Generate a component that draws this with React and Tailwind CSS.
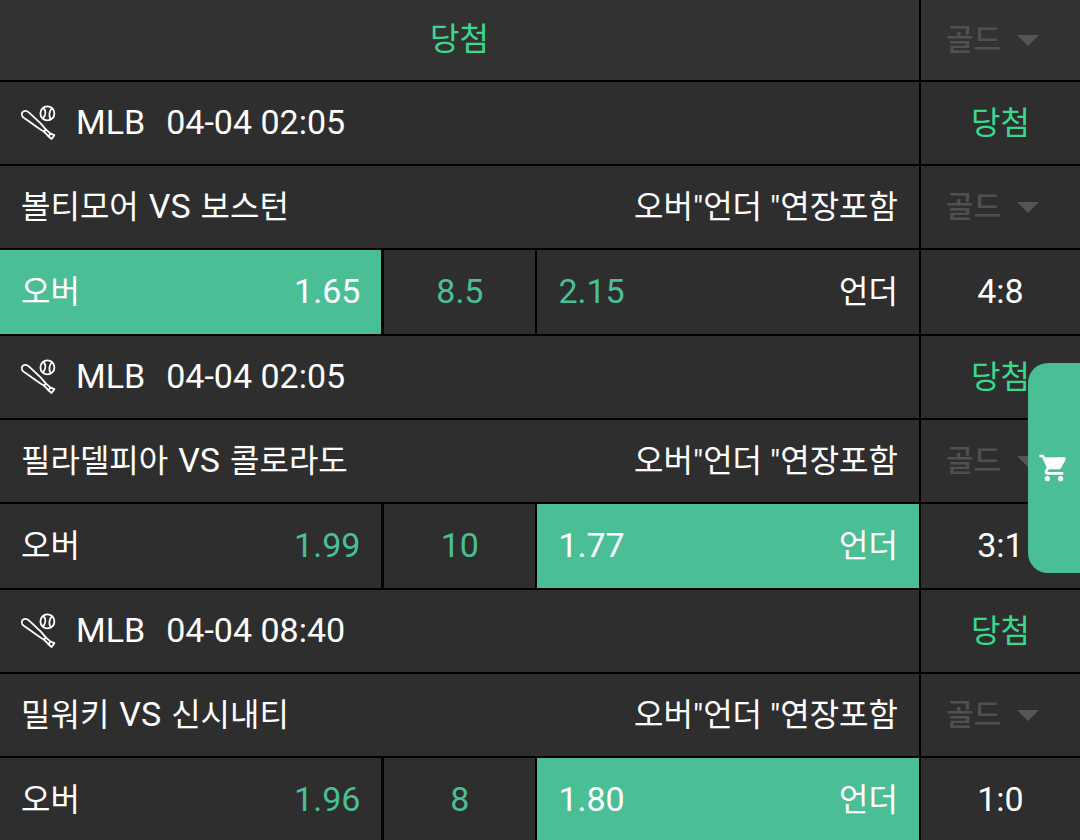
import { MdShoppingCart } from 'react-icons/md';

const games = [
  {
    id: 1,
    league: 'MLB',
    time: '04-04 02:05',
    home: '볼티모어',
    away: '보스턴',
    over: '1.65',
    line: '8.5',
    under: '2.15',
    picked: 'over',
    score: '4:8',
  },
  {
    id: 2,
    league: 'MLB',
    time: '04-04 02:05',
    home: '필라델피아',
    away: '콜로라도',
    over: '1.99',
    line: '10',
    under: '1.77',
    picked: 'under',
    score: '3:1',
  },
  {
    id: 3,
    league: 'MLB',
    time: '04-04 08:40',
    home: '밀워키',
    away: '신시내티',
    over: '1.96',
    line: '8',
    under: '1.80',
    picked: 'under',
    score: '1:0',
  },
];

function BaseballIcon() {
  return (
    <svg
      className="h-9 w-9 shrink-0"
      viewBox="0 0 36 36"
      fill="none"
      stroke="currentColor"
      strokeWidth="1.8"
      strokeLinecap="round"
      strokeLinejoin="round"
      aria-hidden="true"
    >
      <path d="M2.4 11.6C0.6 8.6 2.6 5.6 5.8 5.8C7 5.9 8.2 6.7 9.4 7.9L20.6 18.4C22.6 20.4 23.8 22.4 26 24.6L24 26.7C21.6 25 19.4 24 17.2 22.3L6 14.2C4.4 13.2 3.2 12.8 2.4 11.6Z" />
      <path d="M26 24.6L30.6 28.6M24 26.7L28.4 31.2" />
      <path d="M30.6 28.6L34.4 30.2L31.6 34L28.4 31.2Z" />
      <circle cx="27.4" cy="8.4" r="7" />
      <path d="M23.4 3C26 5.4 26 9.6 23 13.6M32 3.4C29 6 28.6 11 30.6 14.2" />
    </svg>
  );
}

function CurrencySelect() {
  return (
    <div className="relative flex w-full items-center">
      <select
        aria-label="골드"
        className="w-full cursor-pointer appearance-none bg-transparent pl-[25px] text-[30px] leading-10 font-medium text-[#505050] outline-none"
      >
        <option>골드</option>
      </select>
      <svg
        className="pointer-events-none absolute right-[41px] h-3 w-[22px] text-[#555555]"
        viewBox="0 0 22 12"
        fill="currentColor"
        aria-hidden="true"
      >
        <path d="M0 1H22L11 12Z" />
      </svg>
    </div>
  );
}

function Row({ children, side, className }) {
  return (
    <div className={`flex border-b-2 border-black ${className}`}>
      <div className="flex min-w-0 flex-1 items-stretch">{children}</div>
      <div className="flex w-[161px] shrink-0 items-center justify-center border-l-2 border-black">
        {side}
      </div>
    </div>
  );
}

function Won() {
  return <span className="text-[32px] text-[#3bd88c]">당첨</span>;
}

function Game({ game }) {
  const over = game.picked === 'over';
  const under = game.picked === 'under';

  return (
    <section>
      <Row className="h-[84px]" side={<Won />}>
        <div className="flex items-center px-5 text-[34px]">
          <BaseballIcon />
          <span className="ml-5 pb-0.5">{game.league}</span>
          <span className="ml-[21px] pb-0.5">{game.time}</span>
        </div>
      </Row>

      <Row className="h-[84px]" side={<CurrencySelect />}>
        <div className="flex flex-1 items-center justify-between px-[21px] text-[32px]">
          <div className="flex items-center gap-2.5">
            <span>{game.home}</span>
            <span className="pb-0.5 text-[34px]">VS</span>
            <span>{game.away}</span>
          </div>
          <span>오버"언더 "연장포함</span>
        </div>
      </Row>

      <Row className="h-[86px]" side={<span className="pb-0.5 text-[34px]">{game.score}</span>}>
        <button
          type="button"
          className={`flex w-[41.5%] items-center justify-between px-[21px] ${over ? 'bg-[#4abf96]' : ''}`}
        >
          <span className="text-[32px]">오버</span>
          <span className={`pb-0.5 text-[34px] ${over ? '' : 'text-[#4abf96]'}`}>{game.over}</span>
        </button>
        <div className="flex w-[156px] items-center justify-center border-r-2 border-l-3 border-black pb-0.5 text-[34px] text-[#4abf96]">
          {game.line}
        </div>
        <button
          type="button"
          className={`flex flex-1 items-center justify-between px-[21px] ${under ? 'bg-[#4abf96]' : ''}`}
        >
          <span className={`pb-0.5 text-[34px] ${under ? '' : 'text-[#4abf96]'}`}>{game.under}</span>
          <span className="text-[32px]">언더</span>
        </button>
      </Row>
    </section>
  );
}

export default function App() {
  return (
    <main className="h-screen overflow-hidden bg-[#2e2e2e] font-['Roboto','Noto_Sans_CJK_KR',sans-serif] leading-none text-white">
      <Row className="h-[82px] bg-[#323232]" side={<CurrencySelect />}>
        <div className="flex flex-1 items-center justify-center pb-0.5">
          <Won />
        </div>
      </Row>

      {games.map((game) => (
        <Game key={game.id} game={game} />
      ))}

      <button
        type="button"
        aria-label="장바구니"
        className="fixed top-[363px] right-0 flex h-[210px] w-[52px] items-center rounded-l-[20px] bg-[#4abf96] pl-2.5"
      >
        <MdShoppingCart className="h-8 w-8" />
      </button>
    </main>
  );
}
